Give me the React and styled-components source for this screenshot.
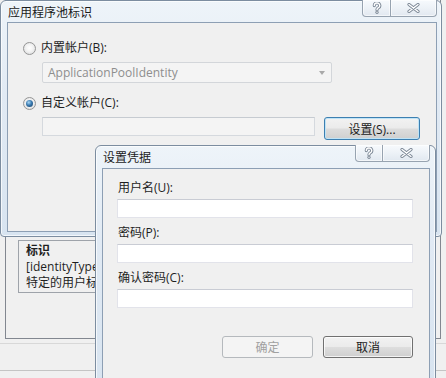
import React from 'react';
import styled, { createGlobalStyle } from 'styled-components';

const GlobalStyle = createGlobalStyle`
  html, body {
    margin: 0;
    padding: 0;
    background: #f4f4f4;
  }
  body {
    font-family: "Open Sans", "Noto Sans CJK SC", sans-serif;
    font-size: 12px;
    color: #1e1e1e;
  }
`;

const Desktop = styled.div`
  position: relative;
  width: 446px;
  height: 378px;
  overflow: hidden;
  background: #f7f7f7;
`;

/* ---------- the IIS settings window underneath ---------- */

const BackWindow = styled.div`
  position: absolute;
  left: 0;
  top: 0;
  width: 446px;
  height: 378px;
  display: flex;
  flex-direction: column;
  background: #f0f0f0;
`;

const PropertyPanel = styled.div`
  margin: 0 5px;
  height: 339px;
  box-sizing: border-box;
  border: 1px solid #828790;
  border-top: none;
  background: #f0f0f0;
  display: flex;
  flex-direction: column;
  justify-content: flex-end;
  padding: 0 0 45px 12px;
`;

const LinkStrip = styled.div`
  height: 8px;
  width: 300px;
  overflow: hidden;
  padding-left: 28px;
  font-size: 8px;
  line-height: 8px;
  color: #6f8fc4;
  background: linear-gradient(#e6eef8, #f0f0f0);
  border-bottom: 1px solid #c9ced6;
`;

const DescBox = styled.div`
  width: 300px;
  height: 53px;
  margin-top: 3px;
  box-sizing: border-box;
  border: 1px solid #9ea3aa;
  border-right: none;
  padding: 2px 7px;
  background: #f0f0f0;
  overflow: hidden;
`;

const DescTitle = styled.div`
  font-weight: bold;
  line-height: 16px;
`;

const DescLine = styled.div`
  line-height: 16px;
  white-space: nowrap;
`;

const BottomSep = styled.div`
  height: 4px;
  border-bottom: 1px solid #d8d8d8;
`;

const BottomArea = styled.div`
  height: 26px;
  border-bottom: 1px solid #c4c4c4;
`;

/* ---------- Aero dialog frame ---------- */

const Window = styled.div`
  position: absolute;
  left: ${p => p.$x}px;
  top: ${p => p.$y}px;
  width: ${p => p.$w}px;
  height: ${p => p.$h}px;
  box-sizing: border-box;
  border: 1px solid #7c8da0;
  border-radius: 6px 6px 4px 4px;
  background: linear-gradient(180deg, #eef4f9 0%, #e1eaf4 40%, #d8e4f0 100%);
  box-shadow: inset 0 0 0 1px rgba(255, 255, 255, 0.7);
  padding: 0 ${p => p.$padR}px ${p => p.$padB}px 6px;
  display: flex;
  flex-direction: column;
`;

const TitleBar = styled.div`
  height: ${p => p.$h}px;
  flex-shrink: 0;
  display: flex;
  align-items: flex-start;
  justify-content: space-between;
`;

const TitleText = styled.div`
  padding-left: 1px;
  line-height: ${p => p.$h}px;
  color: #1b1b1b;
`;

const CaptionButtons = styled.div`
  display: flex;
  margin-top: -1px;
`;

const CaptionButton = styled.div`
  width: ${p => p.$w}px;
  height: 17px;
  box-sizing: border-box;
  border: 1px solid #97a3b0;
  border-top: none;
  border-left: ${p => (p.$first ? '1px solid #97a3b0' : 'none')};
  border-radius: ${p => (p.$first ? '0 0 0 4px' : '0 0 4px 0')};
  background: linear-gradient(180deg, #f7fafd 0%, #edf2f7 50%, #e1e8f0 100%);
  box-shadow: inset 0 0 0 1px rgba(255, 255, 255, 0.6);
  display: flex;
  align-items: center;
  justify-content: center;
`;

const Client = styled.div`
  flex: 1;
  box-sizing: border-box;
  border: 1px solid #8d9fb4;
  background: #f0f0f0;
  display: flex;
  flex-direction: column;
  padding: ${p => p.$padT}px 0 0 ${p => p.$padL}px;
`;

/* ---------- controls ---------- */

const RadioRow = styled.div`
  display: flex;
  align-items: center;
  gap: 5px;
  height: 14px;
  margin-top: ${p => p.$mt || 0}px;
`;

const Radio = styled.span`
  width: 13px;
  height: 13px;
  margin-left: 1px;
  box-sizing: border-box;
  border-radius: 50%;
  border: 1px solid #959595;
  background: radial-gradient(circle at 50% 45%, #ffffff 0%, #f2f2f2 45%, #d2d4d6 100%);
  display: flex;
  align-items: center;
  justify-content: center;
  flex-shrink: 0;
  &::after {
    content: '';
    display: ${p => (p.$checked ? 'block' : 'none')};
    width: 7px;
    height: 7px;
    border-radius: 50%;
    background: radial-gradient(circle at 40% 35%, #a9d8f6 0%, #3a7ab0 45%, #153a5e 100%);
  }
`;

const Label = styled.span`
  line-height: 14px;
  white-space: nowrap;
`;

const Combo = styled.div`
  margin: 7px 0 0 20px;
  width: 290px;
  height: 21px;
  box-sizing: border-box;
  border: 1px solid #d3d6da;
  border-radius: 2px;
  background: #f4f4f4;
  display: flex;
  align-items: center;
  justify-content: space-between;
  padding: 0 6px 0 5px;
  color: #8e8e8e;
`;

const ComboArrow = styled.span`
  width: 0;
  height: 0;
  border-left: 3.5px solid transparent;
  border-right: 3.5px solid transparent;
  border-top: 4px solid #a9a9a9;
`;

const AccountRow = styled.div`
  display: flex;
  align-items: flex-start;
  gap: 9px;
  margin: 7px 0 0 20px;
`;

const Field = styled.div`
  width: ${p => p.$w}px;
  height: 19px;
  box-sizing: border-box;
  border: 1px solid ${p => (p.$disabled ? '#d5d9de' : '#e2e3ea')};
  border-top-color: ${p => (p.$disabled ? '#c6cbd1' : '#c9ccd4')};
  background: ${p => (p.$disabled ? '#f4f4f4' : '#ffffff')};
`;

const Button = styled.div`
  width: ${p => p.$w}px;
  height: ${p => p.$h}px;
  box-sizing: border-box;
  border-radius: 3px;
  border: 1px solid ${p => (p.$disabled ? '#b5b9bd' : p.$focus ? '#3c7fb1' : '#707070')};
  background: ${p =>
    p.$disabled
      ? '#f4f4f4'
      : 'linear-gradient(180deg, #f2f2f2 0%, #ebebeb 48%, #dddddd 52%, #cfcfcf 100%)'};
  box-shadow: ${p =>
    p.$disabled
      ? 'none'
      : p.$focus
      ? 'inset 0 0 0 1px #bfe3f6'
      : 'inset 0 0 0 1px rgba(255, 255, 255, 0.75)'};
  color: ${p => (p.$disabled ? '#a0a0a0' : '#1b1b1b')};
  display: flex;
  align-items: center;
  justify-content: center;
  white-space: nowrap;
`;

const FieldGroup = styled.div`
  display: flex;
  flex-direction: column;
  margin-top: ${p => p.$mt || 0}px;
`;

const FieldLabel = styled.div`
  line-height: 16px;
  height: 16px;
  margin: 0 0 3px 1px;
`;

const ButtonRow = styled.div`
  display: flex;
  justify-content: flex-end;
  gap: 10px;
  margin-top: 28px;
  padding-right: 16px;
`;

const glyphOutline = '#7b8795';

const HelpGlyph = () => (
  <svg width="10" height="12" viewBox="0 0 10 12">
    <g fill="none" strokeLinecap="round" strokeLinejoin="round">
      <path d="M2.3 3.6 A2.7 2.6 0 1 1 6.2 5.9 C5.2 6.5 5 6.9 5 7.8" stroke={glyphOutline} strokeWidth="3.2" />
      <path d="M5 10.2 v0.1" stroke={glyphOutline} strokeWidth="3.2" />
      <path d="M2.3 3.6 A2.7 2.6 0 1 1 6.2 5.9 C5.2 6.5 5 6.9 5 7.8" stroke="#ffffff" strokeWidth="1.4" />
      <path d="M5 10.2 v0.1" stroke="#ffffff" strokeWidth="1.4" />
    </g>
  </svg>
);

const CloseGlyph = () => (
  <svg width="13" height="10" viewBox="0 0 13 10">
    <g strokeLinecap="round">
      <path d="M2 1.5 L11 8.5 M11 1.5 L2 8.5" stroke={glyphOutline} strokeWidth="3.2" />
      <path d="M2 1.5 L11 8.5 M11 1.5 L2 8.5" stroke="#ffffff" strokeWidth="1.4" />
    </g>
  </svg>
);

const Caption = ({ helpW, closeW }) => (
  <CaptionButtons>
    <CaptionButton $w={helpW} $first>
      <HelpGlyph />
    </CaptionButton>
    <CaptionButton $w={closeW}>
      <CloseGlyph />
    </CaptionButton>
  </CaptionButtons>
);

const credentialFields = ['用户名(U):', '密码(P):', '确认密码(C):'];

const App = () => (
  <Desktop>
    <GlobalStyle />

    <BackWindow>
      <PropertyPanel>
        <LinkStrip>编辑...</LinkStrip>
        <DescBox>
          <DescTitle>标识</DescTitle>
          <DescLine>[identityType, username, password] 配置应用程序池以作为内置帐户运行</DescLine>
          <DescLine>特定的用户标识运行。</DescLine>
        </DescBox>
      </PropertyPanel>
      <BottomSep />
      <BottomArea />
    </BackWindow>

    <Window $x={0} $y={0} $w={442} $h={237} $padR={4} $padB={4}>
      <TitleBar $h={21}>
        <TitleText $h={23}>应用程序池标识</TitleText>
        <Caption helpW={29} closeW={46} />
      </TitleBar>
      <Client $padT={18} $padL={14}>
        <RadioRow>
          <Radio />
          <Label>内置帐户(B):</Label>
        </RadioRow>
        <Combo>
          <span>ApplicationPoolIdentity</span>
          <ComboArrow />
        </Combo>
        <RadioRow $mt={13}>
          <Radio $checked />
          <Label>自定义帐户(C):</Label>
        </RadioRow>
        <AccountRow>
          <Field $w={273} $disabled />
          <Button $w={96} $h={23} $focus>设置(S)...</Button>
        </AccountRow>
      </Client>
    </Window>

    <Window $x={95} $y={145} $w={341} $h={240} $padR={5} $padB={4}>
      <TitleBar $h={22}>
        <TitleText $h={24}>设置凭据</TitleText>
        <Caption helpW={28} closeW={47} />
      </TitleBar>
      <Client $padT={11} $padL={14}>
        {credentialFields.map((label, i) => (
          <FieldGroup key={label} $mt={i === 0 ? 0 : 7}>
            <FieldLabel>{label}</FieldLabel>
            <Field $w={296} />
          </FieldGroup>
        ))}
        <ButtonRow>
          <Button $w={91} $h={22} $disabled>确定</Button>
          <Button $w={90} $h={22}>取消</Button>
        </ButtonRow>
      </Client>
    </Window>
  </Desktop>
);

export default App;
